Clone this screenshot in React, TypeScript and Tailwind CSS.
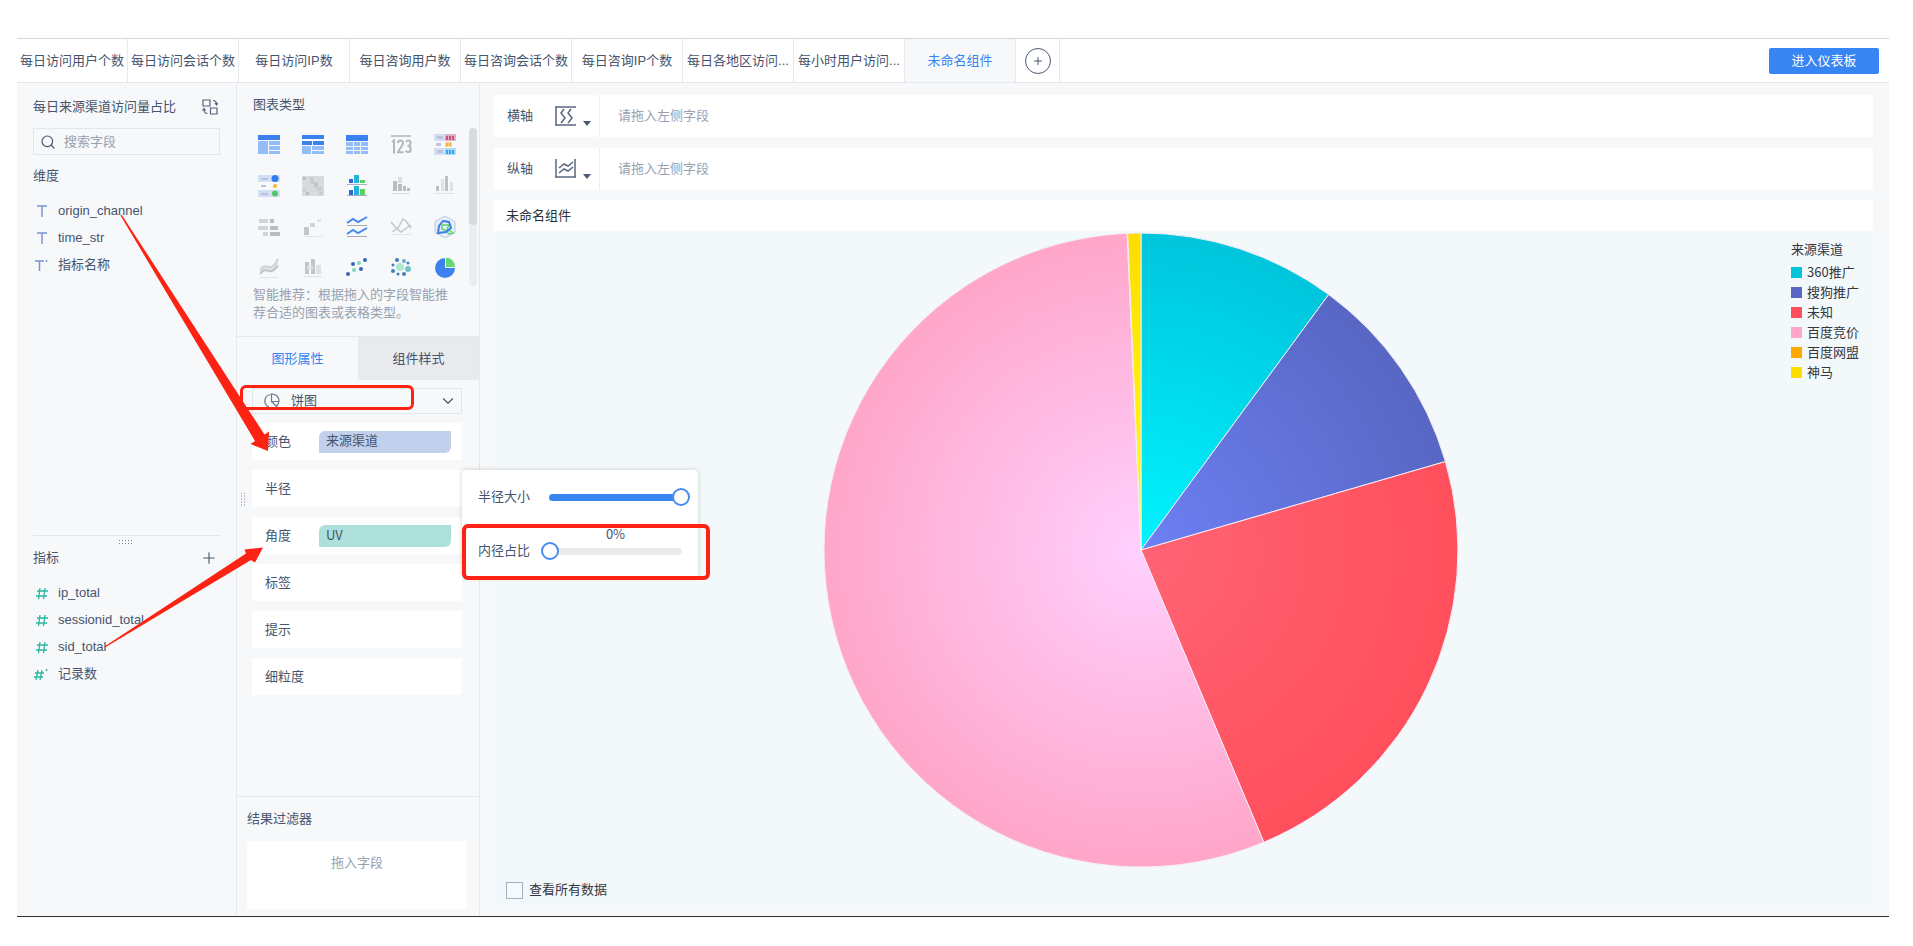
import React, { useState } from 'react';
import { ChevronDown, Plus, Search } from 'lucide-react';

const tabs = [
  '每日访问用户个数',
  '每日访问会话个数',
  '每日访问IP数',
  '每日咨询用户数',
  '每日咨询会话个数',
  '每日咨询IP个数',
  '每日各地区访问...',
  '每小时用户访问...',
  '未命名组件',
];

const dimensions = [
  { name: 'origin_channel', computed: false },
  { name: 'time_str', computed: false },
  { name: '指标名称', computed: true },
];

const measures = [
  { name: 'ip_total', computed: false },
  { name: 'sessionid_total', computed: false },
  { name: 'sid_total', computed: false },
  { name: '记录数', computed: true },
];

// start / end are angles in degrees, clockwise from 12 o'clock
const slices = [
  { id: 'promo360', name: '360推广', color: '#00c5dc', inner: '#00f4ff', start: 0, end: 36.3 },
  { id: 'sogou', name: '搜狗推广', color: '#5867c3', inner: '#6d80f4', start: 36.3, end: 73.8 },
  { id: 'unknown', name: '未知', color: '#ff4f5c', inner: '#ff6474', start: 73.8, end: 157.2 },
  { id: 'baiduBid', name: '百度竞价', color: '#ffa6c9', inner: '#ffd0ff', start: 157.2, end: 357.5 },
  { id: 'baiduUnion', name: '百度网盟', color: '#ffa800', inner: '#ffd200', start: 357.5, end: 357.6 },
  { id: 'shenma', name: '神马', color: '#ffdc00', inner: '#ffff20', start: 357.6, end: 360 },
];

const R = 317;
const C = 317;

function point(deg: number) {
  const rad = (deg * Math.PI) / 180;
  return `${(C + R * Math.sin(rad)).toFixed(2)} ${(C - R * Math.cos(rad)).toFixed(2)}`;
}

function slicePath(start: number, end: number) {
  return `M${C} ${C} L${point(start)} A${R} ${R} 0 ${end - start > 180 ? 1 : 0} 1 ${point(end)} Z`;
}

function PieChart() {
  return (
    <svg viewBox="0 0 634 634" className="w-[634px] h-[634px] overflow-visible" role="img" aria-label="来源渠道">
      <defs>
        {slices.map((s) => (
          <radialGradient key={s.id} id={s.id} gradientUnits="userSpaceOnUse" cx={C} cy={C} r={R}>
            <stop offset="0" stopColor={s.inner} />
            <stop offset="1" stopColor={s.color} />
          </radialGradient>
        ))}
      </defs>
      {slices.map((s) => (
        <path key={s.id} d={slicePath(s.start, s.end)} fill={`url(#${s.id})`} stroke="#f4ecf6" strokeWidth="1" />
      ))}
    </svg>
  );
}

const chartIcons: { name: string; icon: React.ReactNode }[] = [
  {
    name: '分组表',
    icon: (
      <>
        <path fill="#3b82ee" d="M0 1h22v5H0z" />
        <path fill="#92bdf7" d="M0 7h10v13H0zM11 7h11v4H11zM11 12h11v4H11zM11 17h11v3H11z" />
      </>
    ),
  },
  {
    name: '交叉表',
    icon: (
      <>
        <path fill="#3b82ee" d="M0 1h22v4H0zM0 7h10v4H0zM11 7h11v4H11z" />
        <path fill="#92bdf7" d="M0 12h9v8H0zM10 12h12v4H10zM10 17h12v3H10z" />
      </>
    ),
  },
  {
    name: '明细表',
    icon: (
      <>
        <path fill="#3b82ee" d="M0 1h22v6H0z" />
        <path fill="#92bdf7" d="M0 8h7v4H0zM8 8h6v4H8zM15 8h7v4h-7zM0 13h7v3H0zM8 13h6v3H8zM15 13h7v3h-7zM0 17h7v3H0zM8 17h6v3H8zM15 17h7v3h-7z" />
      </>
    ),
  },
  {
    name: '指标卡',
    icon: (
      <>
        <path fill="#c3c5c9" d="M1 1h20v2H1z" />
        <path fill="none" stroke="#b4b7bc" strokeWidth="2" d="M2 8l2-1.500v13M8 9c0-3.500 5-3.500 5 0 0 3-5 7-5 9.200h5.500M16 8c1-2 5-2 4.500 1 0 2-1.500 3-3 3 2 0 3.500 1 3.300 3.400-.3 3.300-4.300 3.500-5 1" />
      </>
    ),
  },
  {
    name: '颜色表格',
    icon: (
      <>
        <path fill="#d3def3" d="M0 0h11v7H0zM0 14h11v7H0z" />
        <path fill="#dfb3c6" d="M11 0h11v7H11z" />
        <path fill="#a9dcf9" d="M11 14h11v7H11z" />
        <path fill="#b9c5e0" d="M3 2h6v3H3zM2 9h5v3H2zM3 16h6v3H3z" />
        <path fill="#cf5070" d="M12 2h2v4h-2zM15 2h2v4h-2zM18 2h2v4h-2z" />
        <path fill="#ffd58b" d="M11 8h7v5h-7z" />
        <path fill="#f5b23c" d="M12 9h2v3h-2zM15 9h2v3h-2z" />
        <path fill="#38a4ee" d="M12 16h2v4h-2zM15 16h2v4h-2zM18 16h2v4h-2z" />
      </>
    ),
  },
  {
    name: '形状表格',
    icon: (
      <>
        <path fill="#d3e0f3" d="M0 0h22v7H0zM0 15h22v7H0z" />
        <path fill="#b5c3dd" d="M3 3h7v2H3zM3 10h5v2H3zM3 18h7v2H3z" />
        <circle cx="17" cy="3.500" r="3.500" fill="#2f7bf0" />
        <circle cx="17" cy="11" r="2" fill="#f8b733" />
        <circle cx="17" cy="18.500" r="3" fill="#52c76c" />
      </>
    ),
  },
  {
    name: '热力图',
    icon: (
      <>
        <path fill="#d9dade" d="M0 1h22v20H0z" />
        <path fill="#cbccd2" d="M7 2h5v5h4v5h4v4h-5v-3h-3V9H8zM1 14h3v3H1zM17 17h4v3h-4z" />
        <path fill="#bdbfc7" d="M1 2h3v3H1zM12 8h3v3h-3zM4 17h3v3H4z" />
      </>
    ),
  },
  {
    name: '对比柱状图',
    icon: (
      <>
        <path fill="#3467d6" d="M3 4h4v4H3zM3 15h4v5H3z" />
        <path fill="#22b5dc" d="M8 0h5v8H8zM8 11h5v9H8z" />
        <path fill="#5bd15b" d="M14 5h5v3h-5zM14 14h5v6h-5z" />
        <path fill="#a8afbd" d="M1 9h20v1H1zM1 20h20v1H1z" />
      </>
    ),
  },
  {
    name: '堆积柱状图',
    icon: (
      <>
        <path fill="#b9bcc1" d="M3 6h4v10H3zM8 9h4v7H8zM13 11h3v5h-3zM17 13h3v3h-3z" />
        <path fill="#dcdee1" d="M8 2h4v6H8zM2 18h18v1H2z" />
      </>
    ),
  },
  {
    name: '多系列柱形图',
    icon: (
      <>
        <path fill="#bcbfc4" d="M2 11h3v5H2zM11 1h3v15h-3z" />
        <path fill="#dfe1e4" d="M7 4h3v12H7zM16 7h3v9h-3zM1 18h19v1H1z" />
      </>
    ),
  },
  {
    name: '条形图',
    icon: (
      <>
        <path fill="#d2d4d8" d="M1 3h9v4H1zM0 10h10v4H0zM5 16h5v4H5z" />
        <path fill="#b9bcc1" d="M12 3h4v4h-4zM12 10h8v4h-8zM12 16h10v4H12z" />
      </>
    ),
  },
  {
    name: '瀑布图',
    icon: (
      <>
        <path fill="#c3c5c9" d="M2 11h5v8H2z" />
        <path fill="#d2d4d8" d="M8 7h5v4H8z" />
        <path fill="#e2e4e7" d="M15 3h4v3h-4zM2 20h19v1H2z" />
      </>
    ),
  },
  {
    name: '分区折线图',
    icon: (
      <>
        <path fill="none" stroke="#4389ec" strokeWidth="2" d="M1 7l6-4 5 3 9-5M1 18l6-4 5 3 9-5" />
        <path fill="#a8a9b5" d="M1 9h20v1H1zM1 20h20v1H1z" />
      </>
    ),
  },
  {
    name: '多系列折线图',
    icon: (
      <>
        <path fill="none" stroke="#c4c6cb" strokeWidth="1.500" d="M1 6l6 7 4 3 10-7M2 16l6-4 5-9 3 2 5 7" />
        <path fill="#e2e4e7" d="M1 18h20v1H1z" />
      </>
    ),
  },
  {
    name: '雷达图',
    icon: (
      <>
        <path fill="#e9effa" stroke="#b9c8e6" d="M11 0l10 5.500v11L11 22 1 16.500v-11z" />
        <path fill="none" stroke="#62d46c" strokeWidth="1.500" d="M8 9h7l-2 4 6 4-4 1-4-4-3-1z" />
        <path fill="none" stroke="#3f7fe8" strokeWidth="2" d="M9 5l6 1 2 6-5 4-8 1 1-7z" />
      </>
    ),
  },
  {
    name: '面积图',
    icon: (
      <>
        <path fill="#e2e4e7" d="M2 13c4-5 6-4 9-3s5-1 9-8v8c-4 4-6 6-9 4s-5-2-9 2z" />
        <path fill="none" stroke="#cfd1d5" strokeWidth="2" d="M2 13c4-5 6-4 9-3s5-1 9-8" />
        <path fill="none" stroke="#c1c3c8" strokeWidth="2" d="M2 17c4-5 6-4 9-3s5-1 9-5" />
        <path fill="#e2e4e7" d="M2 20h18v1H2z" />
      </>
    ),
  },
  {
    name: '范围图',
    icon: (
      <>
        <path fill="#c3c5c9" d="M3 5h4v12H3zM9 2h4v15H9z" />
        <path fill="#dfe1e4" d="M14 8h5v9h-5zM5 9h6v3H5zM2 19h18v1H2z" />
      </>
    ),
  },
  {
    name: '散点图',
    icon: (
      <>
        <g fill="#3866b8">
          <circle cx="19" cy="3" r="2" />
          <circle cx="7" cy="7" r="2" />
          <circle cx="15" cy="12" r="2" />
          <circle cx="2" cy="17" r="2" />
        </g>
        <g fill="#7fd6bd">
          <circle cx="13" cy="6" r="2" />
          <circle cx="8" cy="13" r="2" />
        </g>
      </>
    ),
  },
  {
    name: '聚合气泡图',
    icon: (
      <>
        <circle cx="10" cy="10" r="4" fill="#b0e8d2" />
        <circle cx="18" cy="12" r="3" fill="#6fc3c9" />
        <circle cx="14" cy="4" r="2" fill="#65aee0" />
        <g fill="#4280b8">
          <circle cx="7" cy="3" r="2" />
          <circle cx="3" cy="8" r="1.500" />
          <circle cx="3" cy="14" r="2" />
          <circle cx="8" cy="17" r="1.500" />
          <circle cx="14" cy="17" r="2" />
          <circle cx="18" cy="6" r="1.500" />
        </g>
      </>
    ),
  },
  {
    name: '饼图',
    icon: (
      <>
        <circle cx="11" cy="11" r="10" fill="#3b82ee" />
        <path fill="#62d873" stroke="#f6f8fa" strokeWidth="1" d="M11.500 0a10 10 0 0 1 10 10.500h-10z" />
      </>
    ),
  },
];

function Grip({ className, cols, rows }: { className: string; cols: number; rows: number }) {
  const dots = Array.from({ length: cols * rows });
  return (
    <svg className={className} width={cols * 3} height={rows * 3} aria-hidden="true">
      {dots.map((_, i) => (
        <rect key={i} x={(i % cols) * 3} y={Math.floor(i / cols) * 3} width="1" height="1" fill="#7a8394" />
      ))}
    </svg>
  );
}

function FieldItem({ name, computed, kind }: { name: string; computed: boolean; kind: 'text' | 'number' }) {
  return (
    <li className="h-[27px] flex items-center">
      <svg width="16" height="14" viewBox="0 0 16 14" className="mr-[9px] shrink-0" aria-hidden="true">
        {kind === 'text' ? (
          <path fill="none" stroke="#7b93cf" strokeWidth="1.500" d={computed ? 'M2 3h9M6.500 3v10' : 'M4 2h10M9 2v11'} />
        ) : (
          <path
            fill="none"
            stroke="#2cb5a0"
            strokeWidth="1.300"
            d={computed ? 'M5 3l-2 10M9 3l-2 10M2 6h9M1 10h9' : 'M7 2L5.500 13M12 2l-1.500 11M4 5h11M3 10h11'}
          />
        )}
        {computed && <circle cx="13.500" cy="3" r="1" fill={kind === 'text' ? '#7b93cf' : '#2cb5a0'} />}
      </svg>
      {name}
    </li>
  );
}

function AxisRow({ label, vertical }: { label: string; vertical: boolean }) {
  return (
    <div className="h-[42px] bg-white flex items-center">
      <div className="w-[106px] h-full pl-[13px] flex items-center border-r border-[#eceef1] shrink-0">
        <span className="w-12">{label}</span>
        <button type="button" aria-label={label} className="flex items-end gap-[7px]">
          <svg width="21" height="20" viewBox="0 0 21 20" fill="none" stroke="#5a6780" strokeWidth="1.500">
            {vertical ? (
              <path d="M1 0v18M20 0v18M0 18h21M4 9l5-4 4 2 5-4M4 14l5-4 4 2 5-4" />
            ) : (
              <path d="M0 1h21M0 19h21M1 1v18M9 3L6 7l4 5-4 5M16 3l-3 4 4 5-4 5" />
            )}
          </svg>
          <svg width="8" height="5" viewBox="0 0 8 5" fill="#4a5873">
            <path d="M0 0h8L4 5z" />
          </svg>
        </button>
      </div>
      <span className="pl-[18px] text-[#98a1b0]">请拖入左侧字段</span>
    </div>
  );
}

function PropertyRow({ label, children }: { label: string; children?: React.ReactNode }) {
  return (
    <div className="relative h-[37px] bg-white pl-[13px] pr-[11px] flex items-center">
      <span className="w-[54px] shrink-0">{label}</span>
      {children}
    </div>
  );
}

function Slider({ id, label, value, onChange }: { id: string; label: string; value: number; onChange: (v: number) => void }) {
  return (
    <div className="h-[54px] pl-4 pr-2 flex items-center justify-between">
      <label htmlFor={id}>{label}</label>
      <div className="relative w-[149px] grid items-center">
        <div className="col-start-1 row-start-1 mx-2 h-[7px] rounded-full bg-[#ebebeb] overflow-hidden">
          <div className="h-full bg-[#3685f2]" style={{ width: `${value}%` }} />
        </div>
        <input
          id={id}
          type="range"
          min={0}
          max={100}
          value={value}
          onChange={(e) => onChange(Number(e.target.value))}
          className="col-start-1 row-start-1 relative w-full h-[18px] appearance-none bg-transparent [&::-webkit-slider-thumb]:appearance-none [&::-webkit-slider-thumb]:w-[18px] [&::-webkit-slider-thumb]:h-[18px] [&::-webkit-slider-thumb]:rounded-full [&::-webkit-slider-thumb]:bg-white [&::-webkit-slider-thumb]:border-2 [&::-webkit-slider-thumb]:border-[#4a8af0]"
        />
        {value < 100 && (
          <output htmlFor={id} className="absolute inset-x-0 -top-[18px] text-center leading-5 font-['Noto_Sans_CJK_SC',sans-serif]">
            {value}%
          </output>
        )}
      </div>
    </div>
  );
}

export default function App() {
  const [active, setActive] = useState(tabs.length - 1);
  const [outer, setOuter] = useState(100);
  const [inner, setInner] = useState(0);

  return (
    <div className="min-h-screen bg-white pt-[38px] pb-[29px] pl-[17px] pr-6 flex flex-col text-[13px] leading-5 text-[#46546d] font-['Liberation_Sans','Noto_Sans_CJK_SC',sans-serif]">
      <header className="h-[45px] border-t border-t-[#d4d6d9] border-b border-b-[#e6e8eb] flex items-center">
        <nav className="h-full flex">
          {tabs.map((t, i) => (
            <button
              key={t}
              type="button"
              onClick={() => setActive(i)}
              className={`w-[111px] h-full border-r border-[#e6e8eb] whitespace-nowrap flex items-center justify-center ${
                i === active ? 'bg-[#f6f8fa] text-[#3685f2]' : ''
              }`}
            >
              {t}
            </button>
          ))}
          <div className="w-11 h-full border-r border-[#e6e8eb] flex items-center justify-center">
            <button type="button" aria-label="添加组件" className="w-[26px] h-[26px] rounded-full border border-[#4a5873] flex items-center justify-center">
              <Plus className="w-3 h-3" strokeWidth={2} />
            </button>
          </div>
        </nav>
        <button type="button" className="ml-auto mr-2.5 w-[110px] h-[26px] rounded-xs bg-[#3685f2] text-white">
          进入仪表板
        </button>
      </header>

      <div className="relative flex-1 flex bg-[#f6f8fa] border-b border-[#2f3236]">
        {/* Fields */}
        <aside className="w-[220px] shrink-0 px-4 border-r border-[#e6e8eb]">
          <section className="h-[452px] pt-3.5">
            <div className="flex items-center justify-between">
              <h2>每日来源渠道访问量占比</h2>
              <button type="button" aria-label="切换数据" className="mr-0.5">
                <svg width="16" height="16" viewBox="0 0 16 16" fill="none" stroke="#56627a" strokeWidth="1.200">
                  <path d="M1 1h7v6H1zM8.500 9H15v6H8.500zM11 1.500c2.500 0 3.500 1 3.500 4M13 4l1.500 2L16 4M5.500 14.500C3 14.500 2 13 2 10M.5 11.500L2 9.500l1.500 2" />
                </svg>
              </button>
            </div>
            <label className="mt-[11px] h-[27px] border border-[#e3e6ea] flex items-center">
              <Search className="ml-1.5 mr-2 w-4 h-4 shrink-0" strokeWidth={1.8} />
              <input type="search" aria-label="搜索字段" placeholder="搜索字段" className="w-full bg-transparent outline-none placeholder:text-[#98a1b0]" />
            </label>
            <h3 className="mt-[11px]">维度</h3>
            <ul className="mt-[11px]">
              {dimensions.map((f) => (
                <FieldItem key={f.name} name={f.name} computed={f.computed} kind="text" />
              ))}
            </ul>
          </section>
          <section className="border-t border-[#e3e6ea] pt-1">
            <Grip cols={5} rows={2} className="mx-auto" />
            <div className="mt-0.5 flex items-center justify-between">
              <h3>指标</h3>
              <button type="button" aria-label="添加指标" className="mr-0.5">
                <Plus className="w-[18px] h-[18px]" strokeWidth={1.5} />
              </button>
            </div>
            <ul className="mt-[11px]">
              {measures.map((f) => (
                <FieldItem key={f.name} name={f.name} computed={f.computed} kind="number" />
              ))}
            </ul>
          </section>
        </aside>

        {/* Chart settings */}
        <aside className="relative w-[243px] shrink-0 border-r border-[#e6e8eb] flex flex-col">
          <Grip cols={2} rows={5} className="absolute left-1 top-1/2 -translate-y-1/2" />
          <section className="h-[253px] pt-3">
            <h2 className="pl-4">图表类型</h2>
            <div className="mt-[9px] pl-2.5 flex gap-0.5 h-[162px] overflow-hidden">
              <div className="grid grid-cols-5 auto-rows-[41px] w-[220px]">
                {chartIcons.map((c) => (
                  <button key={c.name} type="button" aria-label={c.name} className="flex items-center justify-center">
                    <svg width="22" height="22" viewBox="0 0 22 22">
                      {c.icon}
                    </svg>
                  </button>
                ))}
              </div>
              <div className="mt-1 w-2 bg-[#ebedef] rounded-sm">
                <div className="h-[97px] bg-[#d8dadd] rounded-sm" />
              </div>
            </div>
            <p className="pl-4 pr-7 leading-[18px] text-[#98a1b0]">
              智能推荐：根据拖入的字段智能推荐合适的图表或表格类型。
            </p>
          </section>

          <div className="h-11 border-t border-[#e6e8eb] flex">
            <button type="button" className="flex-1 text-[#3685f2]">图形属性</button>
            <button type="button" className="flex-1 bg-[#e8eaed]">组件样式</button>
          </div>

          <div className="pt-2 pl-[15px] pr-[17px]">
            <div className="relative h-[26px] border border-[#e3e6ea] flex items-center">
              <svg width="16" height="16" viewBox="0 0 16 16" fill="none" stroke="#6b778c" strokeWidth="1.200" className="absolute left-[11px]">
                <path d="M6.500 1.500A6.500 6.500 0 0 0 5 14M7.500 1a7 7 0 0 1 7.500 7.500H7.500zM7.500 8.500l5 5c1.300-1.200 2-3 2.400-5" />
              </svg>
              <select aria-label="图形类型" className="w-full h-full pl-[38px] appearance-none bg-transparent outline-none">
                <option>饼图</option>
              </select>
              <ChevronDown className="absolute right-1 w-[18px] h-[18px] pointer-events-none" strokeWidth={1.5} />
              <div className="absolute -left-[13px] -top-1 w-[174px] h-[25px] border-3 border-[#fc2314] rounded-md pointer-events-none" />
            </div>

            <div className="mt-[9px] flex flex-col gap-2.5">
              <PropertyRow label="颜色">
                <span className="flex-1 h-[22px] pl-[7px] leading-5 bg-[#c2d0ed] rounded-tl-md rounded-br-md">来源渠道</span>
              </PropertyRow>
              <PropertyRow label="半径">
                <div className="absolute left-full top-0 z-10 w-[236px] bg-white rounded-sm shadow-[0_0_5px_rgba(0,0,0,0.18)]">
                  <Slider id="radius" label="半径大小" value={outer} onChange={setOuter} />
                  <Slider id="inner-radius" label="内径占比" value={inner} onChange={setInner} />
                  <div className="absolute left-0 top-[54px] w-[248px] h-14 border-4 border-[#fc2314] rounded-md pointer-events-none" />
                </div>
              </PropertyRow>
              <PropertyRow label="角度">
                <span className="flex-1 h-[22px] pl-[7px] leading-5 bg-[#ade0db] rounded-tl-md rounded-br-md font-['Noto_Sans_CJK_SC',sans-serif]">UV</span>
              </PropertyRow>
              <PropertyRow label="标签" />
              <PropertyRow label="提示" />
              <PropertyRow label="细粒度" />
            </div>
          </div>

          <section className="mt-auto border-t border-[#e6e8eb] pt-3 pl-2.5 pr-3 pb-[7px]">
            <h2>结果过滤器</h2>
            <div className="mt-3 h-[68px] pt-3 bg-white text-center text-[#98a1b0]">拖入字段</div>
          </section>
        </aside>

        {/* Preview */}
        <main className="flex-1 min-w-0 pt-3 pl-3.5 pr-4 pb-2.5">
          <AxisRow label="横轴" vertical={false} />
          <div className="mt-[11px]">
            <AxisRow label="纵轴" vertical />
          </div>
          <h1 className="mt-2.5 h-[31px] pl-3 bg-white text-[#2b2f36] flex items-center">未命名组件</h1>
          <div className="bg-[#f3f8fb] pt-0.5 pb-1 text-[#33373e]">
            <div className="flex">
              <div className="flex-1 flex justify-center">
                <PieChart />
              </div>
              <div className="w-[85px] pl-[3px] pt-1.5 font-['Noto_Sans_CJK_SC',sans-serif]">
                <h2>来源渠道</h2>
                <ul className="mt-[3px]">
                  {slices.map((s) => (
                    <li key={s.id} className="flex items-center gap-[5px] whitespace-nowrap">
                      <span className="w-[11px] h-[11px]" style={{ backgroundColor: s.color }} />
                      {s.name}
                    </li>
                  ))}
                </ul>
              </div>
            </div>
            <label className="mt-[13px] ml-3 w-fit flex items-center gap-1.5">
              <input type="checkbox" className="w-[17px] h-[17px] appearance-none border border-[#a3b0bf] bg-[#f6fafc] checked:bg-[#3685f2]" />
              查看所有数据
            </label>
          </div>
        </main>

        {/* Drag hints from the fields to their target rows */}
        <svg className="absolute left-0 top-0 z-20 pointer-events-none" width="260" height="580" fill="#fc2314" aria-hidden="true">
          <path d="M103.500 132.500L104.500 131.500L247.500 351.500L252 348.500L251 368L233.500 361L238 358Z" />
          <path d="M88 564.500L87.500 563.500L229 470.500L227.500 466.500L246 464.500L238 479.500L234 477Z" />
        </svg>
      </div>
    </div>
  );
}
